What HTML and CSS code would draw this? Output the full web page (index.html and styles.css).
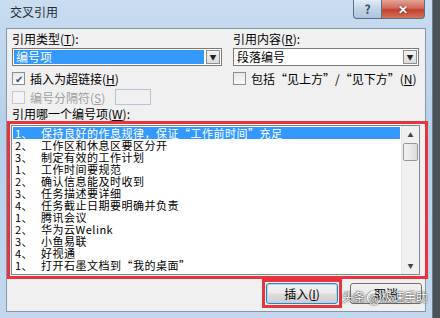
FILE: index.html
```html
<!DOCTYPE html>
<html lang="zh">
<head>
  <meta charset="UTF-8" />
  <title>交叉引用</title>
  <link rel="stylesheet" href="styles.css">
</head>
<body>
  <div class="window">
    <div class="titlebar">
      <span class="title">交叉引用</span>
      <div class="caption-btns">
        <span class="btn-help">?</span>
        <span class="btn-close">✕</span>
      </div>
    </div>

    <div class="client">
      <div class="grid">
        <div class="col">
          <label class="lbl">引用类型(<u>T</u>):</label>
          <div class="select">
            <span class="sel-text active">编号项</span>
            <span class="arrow">▼</span>
          </div>
          <div class="check-row">
            <span class="box checked">✔</span>
            <span>插入为超链接(<u>H</u>)</span>
          </div>
          <div class="check-row disabled">
            <span class="box"></span>
            <span>编号分隔符(<u>S</u>)</span>
            <span class="sep-input"></span>
          </div>
        </div>
        <div class="col">
          <label class="lbl">引用内容(<u>R</u>):</label>
          <div class="select">
            <span class="sel-text">段落编号</span>
            <span class="arrow">▼</span>
          </div>
          <div class="check-row">
            <span class="box"></span>
            <span>包括“见上方”/“见下方”(<u>N</u>)</span>
          </div>
        </div>
      </div>

      <label class="lbl list-lbl">引用哪一个编号项(<u>W</u>):</label>
      <div class="mark list-mark">
        <div class="listbox">
          <ul class="items">
            <li class="selected"><span class="num">1、</span>保持良好的作息规律，保证“工作前时间”充足</li>
            <li><span class="num">2、</span>工作区和休息区要区分开</li>
            <li><span class="num">3、</span>制定有效的工作计划</li>
            <li><span class="num">1、</span>工作时间要规范</li>
            <li><span class="num">2、</span>确认信息能及时收到</li>
            <li><span class="num">3、</span>任务描述要详细</li>
            <li><span class="num">4、</span>任务截止日期要明确并负责</li>
            <li><span class="num">1、</span>腾讯会议</li>
            <li><span class="num">2、</span>华为云Welink</li>
            <li><span class="num">3、</span>小鱼易联</li>
            <li><span class="num">4、</span>好视通</li>
            <li><span class="num">1、</span>打开石墨文档到“我的桌面”</li>
          </ul>
          <div class="scrollbar">
            <span class="sb-arrow">▲</span>
            <span class="sb-thumb"></span>
            <span class="sb-track"></span>
            <span class="sb-arrow">▼</span>
          </div>
        </div>
      </div>

      <div class="buttons">
        <div class="mark btn-mark">
          <button class="btn">插入(<u>I</u>)</button>
        </div>
        <button class="btn">取消</button>
      </div>
      <div class="watermark">头条 <span class="at">@</span>极速手助</div>
    </div>
  </div>
</body>
</html>
```

FILE: styles.css
```css
body {
  margin: 0;
  width: 440px;
  height: 318px;
  overflow: hidden;
  background: #4d5257;
  font-family: "Noto Sans CJK SC", "Liberation Sans", sans-serif;
  font-size: 12px;
  color: #000;
}
.window {
  width: 433px;
  height: 318px;
  background: linear-gradient(#c9dcf0, #b6d0ea 40%, #c3d8ee);
  border-right: 1px solid #6a7b8c;
  box-sizing: border-box;
  display: flex;
  flex-direction: column;
}
.titlebar {
  height: 28px;
  display: flex;
  justify-content: space-between;
  align-items: flex-start;
  flex-shrink: 0;
}
.title {
  margin: 3px 0 0 10px;
  font-size: 12px;
  line-height: 18px;
  color: #1e2a36;
}
.caption-btns {
  display: flex;
  margin-right: 7px;
}
.btn-help, .btn-close {
  height: 18px;
  line-height: 18px;
  text-align: center;
  border: 1px solid #5d6f82;
  border-top: none;
  font-size: 12px;
  font-weight: bold;
}
.btn-help {
  width: 27px;
  background: linear-gradient(#e3ecf6, #c1d3e6 50%, #aec5de);
  color: #3c4c5c;
  border-radius: 0 0 0 4px;
  border-right: none;
}
.btn-close {
  width: 42px;
  background: linear-gradient(#e3a497, #d26a5a 45%, #c2402c 55%, #d3735c);
  color: #fff;
  border-radius: 0 0 4px 0;
  text-shadow: 0 0 2px #5a1a10;
}
.client {
  position: relative;
  margin: 0 6px;
  height: 284px;
  background: #f0f0f0;
  border: 1px solid #8496a8;
  box-sizing: border-box;
  padding: 2px 0 0 5px;
}
.grid {
  display: grid;
  grid-template-columns: 221px 186px;
}
.lbl {
  display: block;
  line-height: 16px;
  height: 16px;
}
.select {
  margin-top: 1px;
  height: 18px;
  border: 1px solid #7a7a7a;
  background: #fff;
  display: flex;
  align-items: stretch;
  box-sizing: border-box;
  padding: 1px;
}
.col:first-child .select {
  width: 210px;
}
.col:nth-child(2) .select {
  width: 186px;
}
.sel-text {
  flex: 1;
  line-height: 14px;
  padding-left: 2px;
}
.sel-text.active {
  background: #3399ff;
  color: #fff;
}
.arrow {
  width: 14px;
  margin-left: 2px;
  border: 1px solid #8e8f8f;
  background: linear-gradient(#f2f2f2, #dcdcdc);
  font-size: 7px;
  line-height: 12px;
  text-align: center;
  color: #222;
  box-sizing: border-box;
}
.check-row {
  display: flex;
  align-items: center;
  height: 18px;
  margin-top: 3px;
  white-space: nowrap;
}
.check-row + .check-row {
  margin-top: 1px;
}
.box {
  width: 11px;
  height: 11px;
  border: 1px solid #8f8f8f;
  background: linear-gradient(#e8e8e8, #fafafa);
  margin-right: 5px;
  font-size: 10px;
  line-height: 11px;
  text-align: center;
  color: #2a4d8a;
}
.disabled {
  color: #a0a0a0;
}
.disabled .box {
  border-color: #c8c8c8;
  background: #f4f4f4;
}
.sep-input {
  width: 34px;
  height: 14px;
  margin-left: 10px;
  border: 1px solid #b5c6d8;
  background: #f0f0f0;
}
.list-lbl {
  margin-top: 1px;
  line-height: 14px;
  height: 14px;
}
.mark {
  border: 3px solid #e8343d;
}
.list-mark {
  margin-left: -5px;
  width: 421px;
  height: 158px;
  box-sizing: border-box;
  padding: 1px 5px 1px 1px;
}
.listbox {
  height: 100%;
  border: 1px solid #828790;
  background: #fff;
  display: flex;
  box-sizing: border-box;
}
.items {
  list-style: none;
  margin: 0;
  padding: 1px 1px 0 1px;
  flex: 1;
  overflow: hidden;
}
.items li {
  height: 12px;
  line-height: 12px;
  font-size: 11px;
  white-space: nowrap;
  padding-left: 2px;
  letter-spacing: 0.5px;
}
.items li.selected {
  background: #3399ff;
  color: #fff;
}
.num {
  display: inline-block;
  width: 26px;
}
.scrollbar {
  width: 17px;
  background: #f0f0f0;
  display: flex;
  flex-direction: column;
  border-left: 1px solid #e6e6e6;
}
.sb-arrow {
  height: 17px;
  font-size: 6px;
  line-height: 17px;
  text-align: center;
  color: #444;
}
.sb-thumb {
  height: 16px;
  margin: 0 1px;
  border: 1px solid #979797;
  border-radius: 2px;
  background: linear-gradient(90deg, #f3f3f3, #dcdcdc);
}
.sb-track {
  flex: 1;
}
.buttons {
  display: flex;
  justify-content: flex-end;
  align-items: center;
  gap: 8px;
  margin: 0 3px 0 0;
}
.btn-mark {
  padding: 1px;
}
.btn {
  width: 72px;
  height: 21px;
  font-family: inherit;
  font-size: 12px;
  border: 1px solid #707070;
  border-radius: 3px;
  background: linear-gradient(#f2f2f2, #ebebeb 48%, #dddddd 52%, #cfcfcf);
  padding: 0;
  color: #000;
}
.btn-mark .btn {
  border-color: #3c7fb1;
  box-shadow: inset 0 0 0 1px #9fdcf6;
}
.watermark {
  position: absolute;
  right: -2px;
  bottom: 6px;
  color: #fff;
  font-size: 12px;
  line-height: 16px;
  text-shadow: 0 0 2px #333, 0 0 1px #000;
  letter-spacing: -0.5px;
  opacity: 0.9;
}
.at {
  display: inline-block;
  width: 12px;
  height: 12px;
  line-height: 11px;
  text-align: center;
  border: 1px solid #fff;
  border-radius: 50%;
  font-size: 10px;
  box-shadow: 0 0 2px #333;
}
```
